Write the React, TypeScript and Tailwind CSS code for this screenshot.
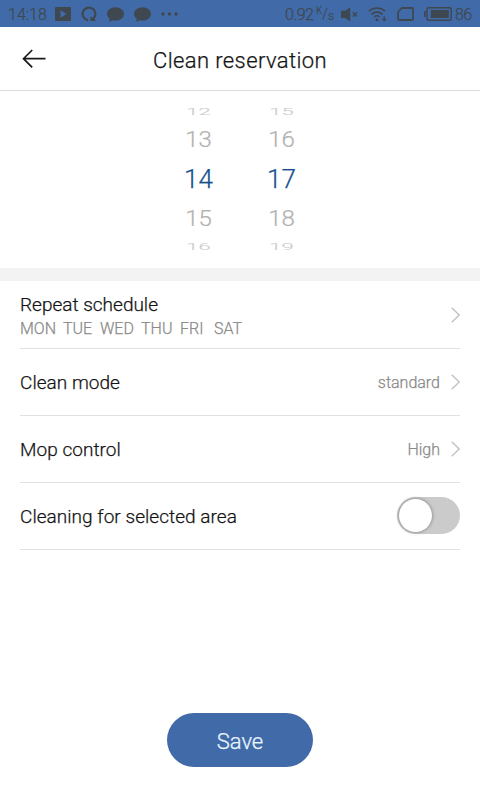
import type { ReactNode } from 'react'

/* ── Data ── */

interface WheelRow {
  hour: string
  minute: string
  rowClass: string
  textClass: string
}

const WHEEL_ROWS: WheelRow[] = [
  { hour: '12', minute: '15', rowClass: 'h-[16px]', textClass: 'text-[22px] text-[#cccccc] scale-y-[0.42]' },
  { hour: '13', minute: '16', rowClass: 'h-[40px]', textClass: 'text-[24px] text-[#b2b2b2] scale-y-[0.92]' },
  { hour: '14', minute: '17', rowClass: 'h-[38px]', textClass: 'text-[26px] text-[#14508f]' },
  { hour: '15', minute: '18', rowClass: 'h-[42px]', textClass: 'text-[24px] text-[#b2b2b2] scale-y-[0.92]' },
  { hour: '16', minute: '19', rowClass: 'h-[14px]', textClass: 'text-[22px] text-[#cccccc] scale-y-[0.42]' },
]

const DAYS = [
  { name: 'MON', width: 'w-[43px]' },
  { name: 'TUE', width: 'w-[37px]' },
  { name: 'WED', width: 'w-[41px]' },
  { name: 'THU', width: 'w-[39px]' },
  { name: 'FRI', width: 'w-[34px]' },
  { name: 'SAT', width: 'w-[30px]' },
]

/* ── Status bar ── */

function ChatBubble() {
  return (
    <svg className="ml-[10px]" width="17" height="15" viewBox="0 0 17 15" fill="currentColor">
      <path d="M8.500.3C13.300.3 17 3.300 17 7s-3.700 6.700-8.500 6.700c-1 0-2-.1-2.900-.4-.9.700-2.400 1.400-3.900 1.200.8-.9 1.100-1.900 1-2.800C1 10.500 0 8.800 0 7 0 3.300 3.700.3 8.500.3z" />
    </svg>
  )
}

function StatusBar() {
  return (
    <div className="flex h-[27px] items-center justify-between bg-[#416ba8] pt-px pr-[8px] pl-[8px] text-[16px] leading-none text-[#3f4850]">
      <div className="flex items-center">
        <span className="w-[47px] translate-y-px">14:18</span>
        <svg width="16" height="14" viewBox="0 0 16 14" fill="currentColor">
          <path fillRule="evenodd" d="M1 0h14a1 1 0 0 1 1 1v12a1 1 0 0 1-1 1H1a1 1 0 0 1-1-1V1a1 1 0 0 1 1-1zM5.500 3.200v7.600L11.500 7z" />
        </svg>
        <svg className="ml-[10px]" width="16" height="16" viewBox="0 0 16 16" fill="none" stroke="currentColor" strokeWidth="2.200">
          <path d="M7.200 14.300A6.400 6.400 0 1 1 12.400 12.600" />
          <path fill="currentColor" stroke="none" d="M9.400 10.200l2.200 1.600 1.800.6 1.400 2.600H9.400z" />
        </svg>
        <ChatBubble />
        <ChatBubble />
        <svg className="ml-[10px]" width="17" height="4" viewBox="0 0 17 4" fill="currentColor">
          <circle cx="2" cy="2" r="1.700" />
          <circle cx="8.500" cy="2" r="1.700" />
          <circle cx="15" cy="2" r="1.700" />
        </svg>
      </div>

      <div className="flex items-center">
        <span className="w-[31px] translate-y-px tracking-[-0.5px]">0.92</span>
        <span className="flex w-[16px] items-center">
          <span className="-translate-y-[3px] text-[10px]">K</span>
          <span className="text-[14px]">/</span>
          <span className="translate-y-[2px] text-[12px]">s</span>
        </span>
        <svg className="ml-[9px]" width="18" height="15" viewBox="0 0 18 15" fill="none" stroke="currentColor">
          <path fill="currentColor" stroke="none" d="M0 3.800h4.300L9.200.2v14.400L4.300 11H0z" />
          <path strokeWidth="1.500" d="M11.800 5.300l4.200 4.200M16 5.300l-4.200 4.200" />
        </svg>
        <svg className="ml-[9px]" width="20" height="16" viewBox="0 0 20 16" fill="none" stroke="currentColor" strokeWidth="1.600">
          <path d="M0.800 5.200a12 12 0 0 1 16.400 0M3.400 8.300a8.300 8.300 0 0 1 11.200 0M6 11a4.800 4.800 0 0 1 6 0" />
          <circle cx="9" cy="13.700" r="1.500" fill="currentColor" stroke="none" />
          <path strokeWidth="1.200" d="M16.200 10v4.600M14.200 12.600l2 2.200 2-2.200" />
        </svg>
        <svg className="ml-[9px]" width="17" height="14" viewBox="0 0 17 14" fill="none" stroke="currentColor" strokeWidth="1.800">
          <path strokeLinejoin="round" d="M4.800 1h10.400a.9.900 0 0 1 .9.900v10.200a.9.900 0 0 1-.9.900H1.900a.9.900 0 0 1-.9-.9V5z" />
        </svg>
        <svg className="ml-[10px]" width="28" height="14" viewBox="0 0 28 14" fill="none" stroke="currentColor" strokeWidth="1.500">
          <rect x="3" y="0.800" width="24.200" height="12.400" rx="1.500" />
          <rect x="6.800" y="3" width="18" height="8" fill="currentColor" stroke="none" />
          <path strokeWidth="1.600" d="M0.900 4v6" />
        </svg>
        <span className="ml-[3px] w-[17px] translate-y-px tracking-[-0.6px]">86</span>
      </div>
    </div>
  )
}

/* ── Setting rows ── */

function Chevron() {
  return (
    <svg className="ml-[11px]" width="9" height="16" viewBox="0 0 9 16" fill="none" stroke="#c4c4c4" strokeWidth="1.500">
      <path d="M0.700 0.700 8.200 8 0.700 15.300" />
    </svg>
  )
}

function SettingRow({ label, children }: { label: string; children: ReactNode }) {
  return (
    <div className="flex h-[67px] items-center justify-between border-b border-[#e1e1e1]">
      <span className="pt-[2px] text-[19px] tracking-[0.04px] text-[#141414]">{label}</span>
      <div className="flex items-center text-[16px] text-[#8a8a8a]">{children}</div>
    </div>
  )
}

/* ── Page ── */

export default function App() {
  return (
    <div className="flex h-[800px] w-[480px] flex-col overflow-hidden bg-white font-['Roboto',sans-serif] font-light [-webkit-text-stroke:0.25px]">
      <StatusBar />

      {/* Title */}
      <header className="grid h-[64px] grid-cols-[60px_1fr_60px] items-center border-b border-[#dcdcdc]">
        <svg className="ml-[22px]" width="24" height="20" viewBox="0 0 24 20" fill="none" stroke="#1a1a1a" strokeWidth="1.700">
          <path d="M10.200 1 1.500 9.700l8.700 8.700M1.500 9.700h22" />
        </svg>
        <h1 className="pt-[3px] text-center text-[22px] font-light tracking-[0.4px] text-[#141414]">Clean reservation</h1>
      </header>

      {/* Time wheel */}
      <div className="flex h-[177px] flex-col pt-[13px]">
        {WHEEL_ROWS.map((row) => (
          <div key={row.hour} className={`flex items-center justify-center gap-[43px] leading-none ${row.rowClass}`}>
            <span className={`w-[40px] text-center ${row.textClass}`}>{row.hour}</span>
            <span className={`w-[40px] text-center ${row.textClass}`}>{row.minute}</span>
          </div>
        ))}
      </div>

      <div className="h-[13px] bg-[#f3f3f3]" />

      {/* Settings */}
      <div className="px-5">
        <div className="flex h-[68px] items-center justify-between border-b border-[#e1e1e1]">
          <div className="pt-[2px]">
            <div className="text-[19px] leading-[25px] text-[#141414]">Repeat schedule</div>
            <div className="flex text-[16px] leading-[23px] text-[#8a8a8a]">
              {DAYS.map((day) => (
                <span key={day.name} className={day.width}>{day.name}</span>
              ))}
            </div>
          </div>
          <Chevron />
        </div>
        <SettingRow label="Clean mode">
          <span className="pt-[2px]">standard</span>
          <Chevron />
        </SettingRow>
        <SettingRow label="Mop control">
          <span className="pt-[2px]">High</span>
          <Chevron />
        </SettingRow>
        <SettingRow label="Cleaning for selected area">
          <button className="mb-px flex h-[37px] w-[63px] items-center rounded-full bg-[#cbcbcb] pl-[2px]">
            <span className="size-[33px] rounded-full bg-white shadow-[0_0_3px_1px_rgba(0,0,0,0.25)]" />
          </button>
        </SettingRow>
      </div>

      <button className="mt-[163px] h-[54px] w-[146px] self-center rounded-full bg-[#416ba8] pt-[2px] text-[22px] font-light text-[#eaf5ff]">
        Save
      </button>
    </div>
  )
}
